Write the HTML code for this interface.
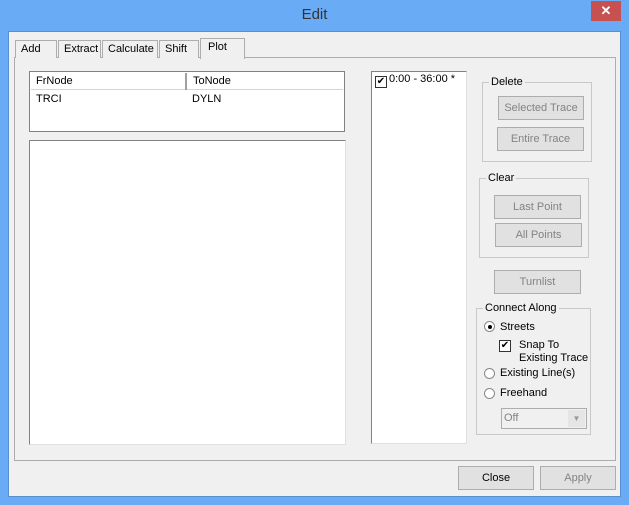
<html><head><style>
body{margin:0;width:629px;height:505px;background:#6aabf6;font-family:"Liberation Sans",sans-serif;font-size:11px;position:relative;overflow:hidden}
div,span{position:absolute;box-sizing:border-box}
.btn{background:#e1e1e1;border:1px solid #adadad;text-align:center;line-height:22px;color:#838383}
.grp{border:1px solid #c8c8c8}
.lg{background:#f0f0f0;padding:0 2px;top:-8px;color:#000;line-height:14px}
.t{color:#000;white-space:nowrap}
.rad{width:11px;height:11px;border:1px solid #888;border-radius:50%;background:#fff}
.cb{width:12px;height:12px;border:1px solid #333;background:#fff;font-size:10px;line-height:10px;text-align:center}
.tab{top:40px;height:18px;background:#f0f0f0;border:1px solid #adadad;border-bottom:none;line-height:17px;padding-left:5px;color:#000}
</style></head><body>
<div class="t" style="left:0;width:629px;top:6px;text-align:center;font-size:15px;color:#333">Edit</div>
<div style="left:591px;top:1px;width:30px;height:20px;background:#c75050;color:#fff;text-align:center;font-size:13px;line-height:19px;font-weight:bold">✕</div>
<div style="left:8px;top:31px;width:613px;height:466px;background:#f0f0f0;border:1px solid #5a8fcf"></div>
<div style="left:14px;top:57px;width:602px;height:404px;border:1px solid #adadad;background:#f0f0f0"></div>
<div class="tab" style="left:15px;width:42px">Add</div>
<div class="tab" style="left:58px;width:43px">Extract</div>
<div class="tab" style="left:102px;width:56px">Calculate</div>
<div class="tab" style="left:159px;width:40px">Shift</div>
<div class="tab" style="left:200px;top:38px;width:45px;height:21px;border-bottom:none;padding-left:7px">Plot</div>
<div style="left:29px;top:71px;width:316px;height:61px;border:1px solid #828282;background:#fff"></div>
<div style="left:31px;top:73px;width:312px;height:17px;background:#fff;border-bottom:1px solid #d5d5d5"></div>
<div style="left:185px;top:73px;width:2px;height:17px;background:#a0a0a0"></div>
<div class="t" style="left:36px;top:75px">FrNode</div>
<div class="t" style="left:193px;top:75px">ToNode</div>
<div class="t" style="left:36px;top:93px">TRCI</div>
<div class="t" style="left:192px;top:93px">DYLN</div>
<div style="left:29px;top:140px;width:317px;height:305px;border:1px solid #828282;border-right-color:#e0e0e0;border-bottom-color:#e0e0e0;background:#fff"></div>
<div style="left:371px;top:71px;width:96px;height:373px;border:1px solid #828282;border-right-color:#e0e0e0;border-bottom-color:#e0e0e0;background:#fff"></div>
<div class="cb" style="left:375px;top:76px">✔</div>
<div class="t" style="left:389px;top:73px">0:00 - 36:00 *</div>
<div class="grp" style="left:482px;top:82px;width:110px;height:80px"><span class="lg" style="left:6px">Delete</span></div>
<div class="btn" style="left:498px;top:96px;width:86px;height:24px">Selected Trace</div>
<div class="btn" style="left:497px;top:127px;width:87px;height:24px">Entire Trace</div>
<div class="grp" style="left:479px;top:178px;width:110px;height:80px"><span class="lg" style="left:6px">Clear</span></div>
<div class="btn" style="left:494px;top:195px;width:87px;height:24px">Last Point</div>
<div class="btn" style="left:495px;top:223px;width:87px;height:24px">All Points</div>
<div class="btn" style="left:494px;top:270px;width:87px;height:24px">Turnlist</div>
<div class="grp" style="left:476px;top:308px;width:115px;height:127px"><span class="lg" style="left:6px">Connect Along</span></div>
<div class="rad" style="left:484px;top:321px"></div><div style="left:488px;top:325px;width:4px;height:4px;background:#000;border-radius:50%"></div>
<div class="t" style="left:500px;top:321px">Streets</div>
<div class="cb" style="left:499px;top:340px">✔</div>
<div class="t" style="left:519px;top:339px;line-height:13px">Snap To<br>Existing Trace</div>
<div class="rad" style="left:484px;top:368px"></div>
<div class="t" style="left:500px;top:367px">Existing Line(s)</div>
<div class="rad" style="left:484px;top:388px"></div>
<div class="t" style="left:500px;top:387px">Freehand</div>
<div style="left:501px;top:408px;width:86px;height:21px;border:1px solid #adadad;background:#f0f0f0;color:#838383;line-height:18px;padding-left:2px">Off</div>
<div style="left:568px;top:410px;width:17px;height:17px;background:#e5e5e5;color:#999;font-size:8px;text-align:center;line-height:17px">▼</div>
<div class="btn" style="left:458px;top:466px;width:76px;height:24px;color:#000">Close</div>
<div class="btn" style="left:540px;top:466px;width:76px;height:24px">Apply</div>
</body></html>
